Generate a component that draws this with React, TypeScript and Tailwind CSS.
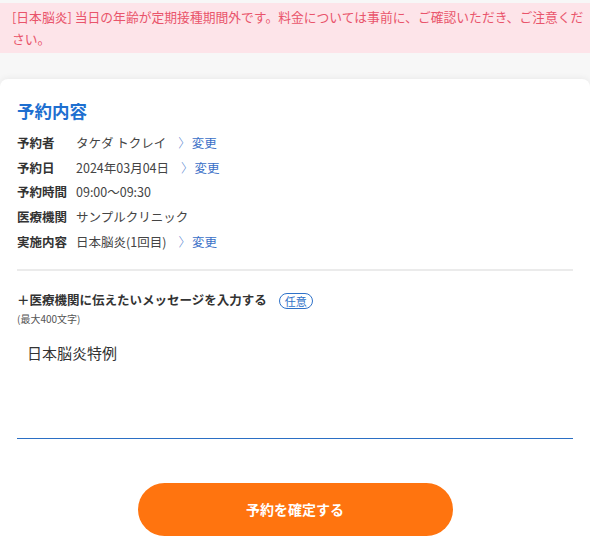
const rows = [
  { label: "予約者", value: "タケダ トクレイ", editable: true },
  { label: "予約日", value: "2024年03月04日", editable: true },
  { label: "予約時間", value: "09:00〜09:30", editable: false },
  { label: "医療機関", value: "サンプルクリニック", editable: false },
  { label: "実施内容", value: "日本脳炎(1回目)", editable: true },
];

export default function App() {
  return (
    <div
      className="min-h-[542px] bg-[#f7f7f7] pt-[3px] text-[#333]"
      style={{ fontFamily: '"Noto Sans CJK JP", "Noto Sans", sans-serif' }}
    >
      {/* Alert */}
      <div className="bg-[#fde4e9] pl-3 pr-1 pt-[3px] pb-[3px] text-[12.8px] leading-[22px] text-[#e9546b]">
        [日本脳炎] 当日の年齢が定期接種期間外です。料金については事前に、ご確認いただき、ご注意ください。
      </div>

      {/* Card */}
      <div className="mt-[26px] rounded-t-lg bg-white px-[17px] pt-[19px] pb-[6px] shadow-[0_-1px_6px_rgba(0,0,0,0.06)]">
        <h2 className="text-[17.5px] font-bold leading-[26px] text-[#1e6fd0]">予約内容</h2>

        <div className="mt-[7px] flex flex-col">
          {rows.map((row) => (
            <div key={row.label} className="flex h-[24.7px] items-center text-[12.5px]">
              <span className="w-[59px] font-bold text-[#333]">{row.label}</span>
              <span className="text-[#444]">{row.value}</span>
              {row.editable && (
                <a href="#" className="ml-[12px] text-[#3a6fc7]">
                  <span className="font-light text-[#5a86d0]">〉</span>
                  <span className="ml-[1px]">変更</span>
                </a>
              )}
            </div>
          ))}
        </div>

        <div className="mt-[15px] h-[2px] bg-[#ebebeb]" />

        {/* Message */}
        <div className="mt-[20px] flex items-center">
          <span className="text-[12.5px] font-bold text-[#333]">＋医療機関に伝えたいメッセージを入力する</span>
          <span className="ml-[12px] rounded-full border border-[#2f72c9] px-[5px] text-[11px] leading-[14px] text-[#2f72c9]">
            任意
          </span>
        </div>
        <div className="mt-[2px] text-[10px] leading-[14px] text-[#555]">(最大400文字)</div>

        <textarea
          className="mt-[12px] block h-[101px] w-full resize-none border-b border-[#2b6fc4] px-[10px] pt-[4px] text-[15px] leading-[22px] text-[#333] outline-none"
          defaultValue="日本脳炎特例"
        />

        <div className="mt-[44px] flex justify-center">
          <button className="h-[53px] w-[315px] rounded-full bg-[#ff740f] text-[14px] font-bold text-white">
            予約を確定する
          </button>
        </div>
      </div>
    </div>
  );
}
